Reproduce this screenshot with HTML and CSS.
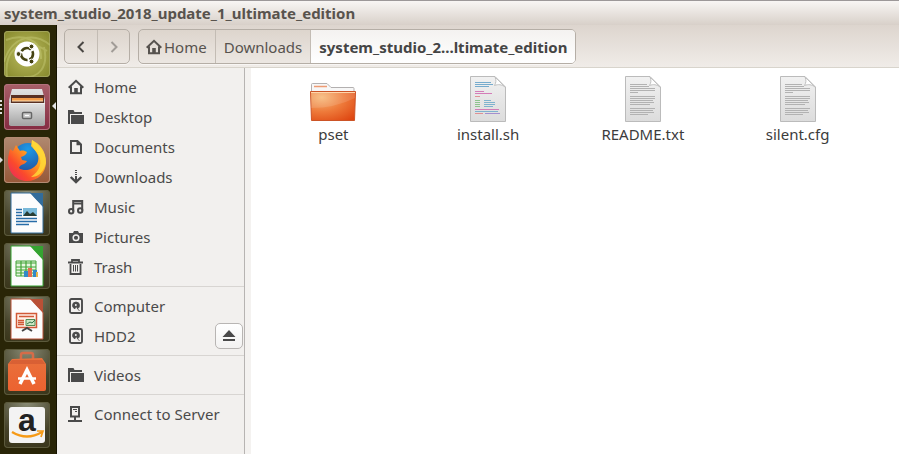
FILE: index.html
```html
<!DOCTYPE html>
<html lang="en">
<head>
<meta charset="utf-8">
<title>system_studio_2018_update_1_ultimate_edition</title>
<link rel="stylesheet" href="styles.css">
</head>
<body>
<svg class="defs" width="0" height="0" aria-hidden="true">
  <defs>
    <linearGradient id="paper" x1="0" y1="0" x2="0" y2="1"><stop offset="0" stop-color="#f1f1f1"/><stop offset="1" stop-color="#dcdcdc"/></linearGradient>
    <linearGradient id="metal" x1="0" y1="0" x2="0" y2="1"><stop offset="0" stop-color="#e2e2e2"/><stop offset="1" stop-color="#a5a5a5"/></linearGradient>
    <linearGradient id="bag" x1="0" y1="0" x2="0" y2="1"><stop offset="0" stop-color="#e9713c"/><stop offset="1" stop-color="#ec6230"/></linearGradient>
    <radialGradient id="folder-front" cx=".25" cy=".2" r="1"><stop offset="0" stop-color="#f6b878"/><stop offset=".5" stop-color="#ee7a3a"/><stop offset="1" stop-color="#de4611"/></radialGradient>
    <linearGradient id="fox" x1="1" y1="0" x2="0" y2="1"><stop offset="0" stop-color="#fff04a"/><stop offset=".4" stop-color="#ffa020"/><stop offset=".7" stop-color="#fb4a2c"/><stop offset="1" stop-color="#e5206a"/></linearGradient>
    <radialGradient id="globe" cx=".5" cy=".2" r=".9"><stop offset="0" stop-color="#1d9be8"/><stop offset="1" stop-color="#26408f"/></radialGradient>
    <symbol id="i-home" viewBox="0 0 16 16"><path d="M.7 8.700 8 1.800l7.300 6.900M3 7.500v6.700h10V7.500" fill="none" stroke="currentColor" stroke-width="2"/><path d="M6.200 9h3.600v5H6.200z" fill="currentColor"/></symbol>
    <symbol id="i-folder" viewBox="0 0 16 16"><path d="M0 1h5.500l1 2H14v2H2v10H0z" fill="currentColor"/><path d="M3 6h13v9H3z" fill="currentColor"/></symbol>
    <symbol id="i-doc" viewBox="0 0 16 16"><path d="M3 2h6.500L13 5.500V14H3z" fill="none" stroke="currentColor" stroke-width="2"/><path d="M8.500 1v5.300H13z" fill="currentColor"/></symbol>
    <symbol id="i-down" viewBox="0 0 16 16"><path d="M7 1h2v1H7zm0 2h2v1H7zm0 2h2v1H7zm0 2h2v5H7z" fill="currentColor"/><path d="m2.700 8 5.300 5 5.300-5" fill="none" stroke="currentColor" stroke-width="2.400"/></symbol>
    <symbol id="i-music" viewBox="0 0 16 16"><path d="M5.200 12.500V2h9v9.500M5.200 4.500h9" fill="none" stroke="currentColor" stroke-width="2"/><circle cx="3.200" cy="12.200" r="2.200" fill="none" stroke="currentColor" stroke-width="2"/><circle cx="12.200" cy="11.500" r="2.200" fill="none" stroke="currentColor" stroke-width="2"/></symbol>
    <symbol id="i-camera" viewBox="0 0 16 16"><path d="M1 4h4l1-2h4l1 2h4v10H1z" fill="currentColor"/><circle cx="8" cy="8.700" r="2.800" fill="none" stroke="#f2f0ee" stroke-width="1.500"/></symbol>
    <symbol id="i-trash" viewBox="0 0 16 16"><path d="M0 3.500h15M4 3V1h7v2M2.500 5v10h10V5" fill="none" stroke="currentColor" stroke-width="1.800"/><path d="M5.500 6v6.500m2-6.500v6.500m2-6.500v6.500" stroke="currentColor"/></symbol>
    <symbol id="i-disk" viewBox="0 0 16 16"><rect x="2" y="1" width="12" height="14" rx="1.500" fill="none" stroke="currentColor" stroke-width="1.900"/><path d="M4.500 7.500a3.500 3.500 0 1 1 7 0c0 1.500-.7 2.400-1.800 3L8 8.500l-1 2.200C5.500 10.300 4.500 9 4.500 7.500zM9 10l2.500 3" fill="currentColor" stroke="currentColor" stroke-width=".8"/><circle cx="7.800" cy="7" r="1" fill="#f2f0ee"/></symbol>
    <symbol id="i-server" viewBox="0 0 16 16"><path d="M3 1h8v9.500H3zM7 11v3M0 15h14" fill="none" stroke="currentColor" stroke-width="2"/><path d="M5 3.500h4M7 5.500h2" stroke="currentColor"/></symbol>
    <symbol id="page" viewBox="0 0 36 46"><path d="M.5.5H25L35.500 11v34.500H.5z" fill="url(#paper)" stroke="#bbb"/><path d="M25 1c1.500 3 1 6-.5 8.500 4-1.500 7-1 10.500 1.500z" fill="#fff" stroke="#c0c0c0"/></symbol>
    <symbol id="textpage" viewBox="0 0 36 46"><use href="#page"/><path d="M5 8.500h17M5 10.500h19M5 12.500h25M5 14.500h25M5 16.500h8M5 20.500h25M5 22.500h25M5 24.500h23M5 26.500h24M5 28.500h20M5 32.500h25M5 34.500h23M5 36.500h24M5 38.500h18" stroke="#b2b2b2"/></symbol>
    <symbol id="office" viewBox="0 0 46 46"><path d="M7 3h20l12 13v27H7z" fill="#fcfcfc" stroke="currentColor"/><path d="M26 3h13v14z" fill="currentColor"/></symbol>
  </defs>
</svg>

<div class="desktop">
  <header class="titlebar"><h1>system_studio_2018_update_1_ultimate_edition</h1></header>

  <nav class="launcher" aria-label="Launcher">
    <button class="tile dash" aria-label="Dash"><svg viewBox="0 0 46 46"><path d="M0 31C7 6 29 0 46 14M3 46C-1 18 19 4 43 20M20 46c14 1 25-9 20-30M2 9c15-6 36-2 35 19" fill="none" stroke="#c8cc78" stroke-width="2" opacity=".45"/><circle cx="23" cy="23" r="12.500" fill="#fff"/><circle cx="23" cy="23" r="6" fill="none" stroke="#454312" stroke-width="2.600" stroke-dasharray="10.600 2" stroke-dashoffset="4"/><g fill="#454312" stroke="#fff"><circle cx="14.500" cy="23" r="2.400"/><circle cx="27.500" cy="15.500" r="2.400"/><circle cx="27.500" cy="30.500" r="2.400"/></g></svg></button>
    <button class="tile files active" aria-label="Files"><svg viewBox="0 0 46 46"><path d="M8 5h30l3 11v24q0 2-2 2H7q-2 0-2-2V16z" fill="url(#metal)"/><path d="M7 11h33v9H7z" fill="#5a3022"/><path d="M8 14h31v3H8z" fill="#f29a48"/><path d="M8 17h31" stroke="#ffe2b6"/><path d="M5 19h36v22H5z" fill="url(#metal)"/><path d="M5 19.500h36" stroke="#eee"/><rect x="18.500" y="28.500" width="9" height="6" rx="1" fill="#ccc" stroke="#666" stroke-width="1.500"/><path d="M21 31.500h4" stroke="#fff"/></svg></button>
    <button class="tile firefox running" aria-label="Firefox"><svg viewBox="0 0 46 46"><circle cx="24" cy="22" r="16" fill="url(#globe)"/><path d="M6 12l3 2 3-6 4 6c3-1 5 0 7 1-1 3-3 4-6 5l1 3 5 1c-2 4-7 3-8 7 5 4 14 2 18-4 4-8-1-13-6-18l1-6c8 4 14 11 14 22 0 11-8 19-19 19S4 35 4 24c0-5 1-8 2-12z" fill="url(#fox)"/><path d="M28 3c7 6 14 12 14 23-3 10-8 14-15 14 9-6 12-15 7-23-3-4-7-7-6-14z" fill="#ffdb38" opacity=".8"/></svg></button>
    <button class="tile writer" aria-label="LibreOffice Writer"><svg viewBox="0 0 46 46"><use href="#office"/><path d="M12 19.500h6m-6 3h6m-6 3h6m-6 3h21m-21 3h21m-21 3h13" stroke="#286da8" stroke-width="1.600"/><path d="M19 18h14v8H19z" fill="#79b9d9"/><path d="m19 26 4-5 3 3 3-2 4 4z" fill="#283e35"/></svg></button>
    <button class="tile calc" aria-label="LibreOffice Calc"><svg viewBox="0 0 46 46"><use href="#office"/><path d="M12 18h20v15H12z" fill="#e7f7df" stroke="#43a436"/><path d="M12 20h20M12 24h20m-20 3h20m-20 3h20M17 18v15m5-15v15m5-15v15" stroke="#43a436" stroke-width="1.200"/><path d="M20 28h4v6h-4zm9-1h4v7h-4z" fill="#3389c8"/><path d="M24 25h4v9h-4z" fill="#e66c50"/><path d="M32 29h2v5h-2z" fill="#e5b54a"/></svg></button>
    <button class="tile impress" aria-label="LibreOffice Impress"><svg viewBox="0 0 46 46"><use href="#office"/><path d="M12.500 17.500h20v14h-20z" fill="#fff1e7" stroke="#d15a38" stroke-width="1.500"/><path d="M15 20.500h15M14 24.500h6m-6 2h6m-6 2h6" stroke="#d15a38" stroke-width="1.500"/><path d="M22 23.500h9v6h-9z" fill="#cbe6c2" stroke="#508d56"/><path d="m23 28 3-2 2 1 3-3" fill="none" stroke="#35764c"/><path d="m18 35 5-3 5 3" fill="none" stroke="#454545" stroke-width="2"/></svg></button>
    <button class="tile software" aria-label="Ubuntu Software"><svg viewBox="0 0 46 46"><path d="M17 12V6q0-2 2-2h8q2 0 2 2v6" fill="none" stroke="#d56c48" stroke-width="2.500"/><path d="m8 10 30-1 4 6v25q0 2-2 2H6q-2 0-2-2V15z" fill="url(#bag)"/><path d="m5 15 3-4h30l3 4z" fill="#ca5330" opacity=".55"/><path d="m16 35 7-14 7 14" fill="none" stroke="#fff" stroke-width="3.500"/><path d="M14 29.500h18" stroke="#fff" stroke-width="2.500"/></svg></button>
    <button class="tile amazon" aria-label="Amazon"><svg viewBox="0 0 46 46"><rect x="5" y="5" width="36" height="36" rx="3" fill="#f3f3f3"/><text x="23" y="29" class="amazon-letter">a</text><path d="M8 30q15 9 30 0" fill="none" stroke="#f69a16" stroke-width="2.400"/><path d="M33 29h6l-2 6" fill="none" stroke="#f69a16" stroke-width="1.700"/></svg></button>
  </nav>

  <div class="toolbar">
    <div class="history">
      <button aria-label="Back"><svg viewBox="0 0 16 16"><path d="m10.500 3-5 5 5 5" /></svg></button>
      <button aria-label="Forward" disabled><svg viewBox="0 0 16 16"><path d="m5.500 3 5 5-5 5"/></svg></button>
    </div>
    <div class="pathbar">
      <button class="path-home"><svg class="icon"><use href="#i-home"/></svg>Home</button>
      <button>Downloads</button>
      <button class="current">system_studio_2...ltimate_edition</button>
    </div>
  </div>

  <aside class="sidebar">
    <ul>
      <li><a href="#"><svg class="icon"><use href="#i-home"/></svg>Home</a></li>
      <li><a href="#"><svg class="icon"><use href="#i-folder"/></svg>Desktop</a></li>
      <li><a href="#"><svg class="icon"><use href="#i-doc"/></svg>Documents</a></li>
      <li><a href="#"><svg class="icon"><use href="#i-down"/></svg>Downloads</a></li>
      <li><a href="#"><svg class="icon"><use href="#i-music"/></svg>Music</a></li>
      <li><a href="#"><svg class="icon"><use href="#i-camera"/></svg>Pictures</a></li>
      <li><a href="#"><svg class="icon"><use href="#i-trash"/></svg>Trash</a></li>
    </ul>
    <ul>
      <li><a href="#"><svg class="icon"><use href="#i-disk"/></svg>Computer</a></li>
      <li><a href="#"><svg class="icon"><use href="#i-disk"/></svg>HDD2</a><button class="eject" aria-label="Eject HDD2"><svg viewBox="0 0 14 12"><path d="M7 0l6.500 7H.5zM1 9h12v2H1z" fill="currentColor"/></svg></button></li>
    </ul>
    <ul>
      <li><a href="#"><svg class="icon"><use href="#i-folder"/></svg>Videos</a></li>
    </ul>
    <ul>
      <li><a href="#"><svg class="icon"><use href="#i-server"/></svg>Connect to Server</a></li>
    </ul>
  </aside>

  <main class="content">
    <a class="file" href="#"><svg viewBox="0 0 48 46"><path d="M2.500 20V8.500q0-1 1-1H18l4 4h22q1 0 1 1V20z" fill="#f7f7f7" stroke="#b3b0b0"/><path d="M5 10.500h13" stroke="#ee9b73" stroke-width="1.500"/><path d="M1.500 15.500h45l-1 29h-43z" fill="url(#folder-front)" stroke="#cc5426"/><path d="M2 16.500h44" stroke="#ffd1a1"/><path d="M2 32q24 0 44-10V16H2z" fill="#fff" opacity=".12"/></svg><span>pset</span></a>
    <a class="file" href="#"><svg viewBox="0 0 36 46"><use href="#page"/><g opacity=".8"><path d="M5 6.500h16M5 8.500h18M5 10.500h14" stroke="#5a9cc6"/><path d="M5 15.500h9M5 17.500h17M5 33.500h24" stroke="#cf63ad"/><path d="M5 20.500h5M5 37.500h8" stroke="#df7d82"/><path d="M5 24.500h5M5 26.500h5M5 28.500h5M5 30.500h5" stroke="#79bb79"/><path d="M14 24.500h7M14 26.500h11M14 28.500h11M14 30.500h9M5 35.500h23" stroke="#66a7c9"/><path d="M15 37.500h15" stroke="#967ccb"/></g></svg><span>install.sh</span></a>
    <a class="file" href="#"><svg viewBox="0 0 36 46"><use href="#textpage"/></svg><span>README.txt</span></a>
    <a class="file" href="#"><svg viewBox="0 0 36 46"><use href="#textpage"/></svg><span>silent.cfg</span></a>
  </main>
</div>
</body>
</html>
```
FILE: styles.css
```css
* { box-sizing: border-box; }

body {
  margin: 0;
  color: #4a4a4a;
  background: #fff;
  font: 15px/20px "Noto Sans", "Open Sans", sans-serif;
}

button { font: inherit; color: inherit; padding: 0; border: 0; background: none; }
a { color: inherit; text-decoration: none; }
ul { list-style: none; margin: 0; padding: 0; }
svg { display: block; flex: none; }
.defs { position: absolute; }
.icon { width: 16px; height: 16px; }

.desktop {
  display: grid;
  grid-template: 25px 43px 1fr / 57px 194px 1fr;
  min-height: 100vh;
}

.titlebar {
  grid-column: 1 / -1;
  display: flex;
  align-items: center;
  padding: 0 4px;
  border-top: 1px solid #9c9899;
  background: linear-gradient(#f8f6f4, #d8d0c9);
}

.titlebar h1 { margin: 0; font-size: 15px; line-height: 20px; color: #58534d; }

.launcher {
  grid-row: 2 / 4;
  display: flex;
  flex-direction: column;
  align-items: center;
  gap: 7px;
  padding: 6px 7px 6px 4px;
  background: #292507;
  border-right: 1px solid #161300;
}

.tile {
  position: relative;
  width: 46px;
  height: 46px;
  border-radius: 4px;
  background: radial-gradient(circle at 50% 0, #8a8c76, #454229 65%, #383419);
  box-shadow: inset 0 0 0 1px #5c5a3c;
}

.tile svg { width: 46px; height: 46px; }
.dash { background: radial-gradient(#bcbd61, #85872a); box-shadow: inset 0 0 0 1px #a1a359; }
.files { background: linear-gradient(#a86068, #852b42); box-shadow: inset 0 0 0 1px #b2717b; }
.firefox { background: linear-gradient(#b08970, #965838); box-shadow: inset 0 0 0 1px #b38b74; }
.writer { color: #326c9b; }
.calc { color: #35a331; }
.impress { color: #b95036; }
.amazon-letter { font: bold 32px "Liberation Sans", sans-serif; text-anchor: middle; fill: #222; }

.running::before {
  content: "";
  position: absolute;
  left: -4px;
  top: 20px;
  border: 3px solid transparent;
  border-left-color: #ddd;
  border-right: 0;
}

.active::before {
  content: "";
  position: absolute;
  left: -4px;
  top: 16px;
  width: 2px;
  height: 14px;
  background: repeating-linear-gradient(#ddd 0 2px, transparent 2px 4px);
}

.active::after {
  content: "";
  position: absolute;
  right: -6px;
  top: 18px;
  border: 4px solid transparent;
  border-right-color: #e4e4e4;
  border-left: 0;
}

.toolbar {
  grid-column: 2 / -1;
  display: flex;
  gap: 8px;
  padding: 4px 7px;
  background: linear-gradient(#ddd5ce, #f0ece8);
  border-bottom: 1px solid #d8d4cc;
}

.history, .pathbar {
  display: flex;
  height: 35px;
  border: 1px solid #b5aea6;
  border-radius: 5px;
  background: linear-gradient(#ddd5cd, #ece7e2);
  box-shadow: 0 1px #f8f6f4;
  overflow: hidden;
}

.history button { display: grid; place-items: center; width: 32px; }
.history button + button, .pathbar button + button { border-left: 1px solid #c3bcb4; }
.history svg { width: 16px; height: 16px; fill: none; stroke: #4a4744; stroke-width: 2; }
.history button:disabled svg { stroke: #a19c97; }
.pathbar button { padding: 0 8px; color: #57534f; white-space: nowrap; }
.pathbar .path-home { display: flex; align-items: center; gap: 2px; padding: 0 8px 0 7px; }
.pathbar .current { font-weight: bold; color: #454545; background: linear-gradient(#f4f2f0, #fff); }

.sidebar {
  margin-right: 6px;
  padding-top: 4px;
  background: #f2f0ee;
  border-right: 1px solid #b7b4b2;
  box-shadow: 6px 0 #f4f2f0;
}

.sidebar ul + ul { margin-top: 4px; padding-top: 4px; border-top: 1px solid #d8d5d2; }
.sidebar li { display: flex; align-items: center; height: 30px; padding: 0 1px 0 11px; }
.sidebar a { display: flex; flex: 1; align-items: center; gap: 10px; white-space: nowrap; }

.eject {
  display: grid;
  place-items: center;
  width: 28px;
  height: 26px;
  border: 1px solid #b8b5b3;
  border-radius: 5px;
  background: linear-gradient(#fff, #f3f2f1);
}

.eject svg { width: 14px; height: 12px; }

.content {
  display: grid;
  grid-template-columns: repeat(4, 1fr);
  align-content: start;
  padding: 8px 24px 0 5px;
}

.file { display: flex; flex-direction: column; align-items: center; gap: 2px; color: #3c3c3c; }
.file svg { height: 46px; }
```
